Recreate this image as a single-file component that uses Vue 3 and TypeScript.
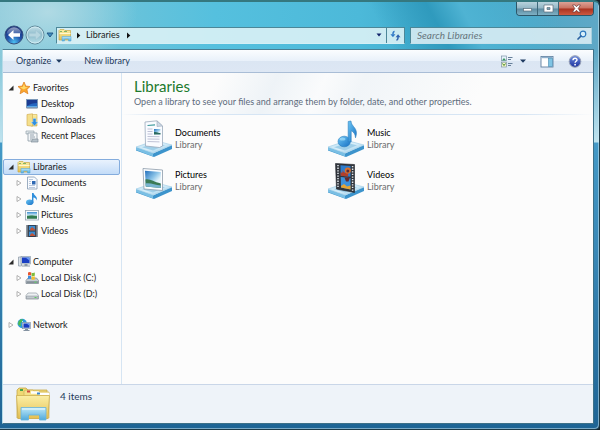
<script setup lang="ts">
import { reactive, ref } from 'vue'

interface NavChild {
  label: string
  icon: string
  expandable: boolean
}

interface NavGroup {
  label: string
  icon: string
  open: boolean
  children: NavChild[]
}

interface LibraryItem {
  name: string
  kind: string
  icon: string
}

const groups = reactive<NavGroup[]>([
  {
    label: 'Favorites',
    icon: 'star',
    open: true,
    children: [
      { label: 'Desktop', icon: 'desktop', expandable: false },
      { label: 'Downloads', icon: 'downloads', expandable: false },
      { label: 'Recent Places', icon: 'recent', expandable: false },
    ],
  },
  {
    label: 'Libraries',
    icon: 'folder',
    open: true,
    children: [
      { label: 'Documents', icon: 'document', expandable: true },
      { label: 'Music', icon: 'note', expandable: true },
      { label: 'Pictures', icon: 'picture', expandable: true },
      { label: 'Videos', icon: 'film', expandable: true },
    ],
  },
  {
    label: 'Computer',
    icon: 'computer',
    open: true,
    children: [
      { label: 'Local Disk (C:)', icon: 'diskc', expandable: true },
      { label: 'Local Disk (D:)', icon: 'diskd', expandable: true },
    ],
  },
  { label: 'Network', icon: 'network', open: false, children: [] },
])

const libraries: LibraryItem[] = [
  { name: 'Documents', kind: 'Library', icon: 'lib-documents' },
  { name: 'Music', kind: 'Library', icon: 'lib-music' },
  { name: 'Pictures', kind: 'Library', icon: 'lib-pictures' },
  { name: 'Videos', kind: 'Library', icon: 'lib-videos' },
]

const selected = ref('Libraries')
const query = ref('')
</script>

<template>
  <div class="window">
    <svg class="sprites" aria-hidden="true">
      <defs>
        <linearGradient id="g-base" x1="0" y1="0" x2="1" y2="1">
          <stop offset="0" stop-color="#b9def0" />
          <stop offset="0.5" stop-color="#d9effa" />
          <stop offset="1" stop-color="#8cc6e6" />
        </linearGradient>
        <linearGradient id="g-note" x1="0" y1="0" x2="1" y2="1">
          <stop offset="0" stop-color="#6cc6f4" />
          <stop offset="1" stop-color="#1670c4" />
        </linearGradient>
        <linearGradient id="g-folder" x1="0" y1="0" x2="0" y2="1">
          <stop offset="0" stop-color="#fbefa6" />
          <stop offset="1" stop-color="#e5c052" />
        </linearGradient>
        <linearGradient id="g-stand" x1="0" y1="0" x2="0" y2="1">
          <stop offset="0" stop-color="#bfe9f8" />
          <stop offset="1" stop-color="#4fa9dc" />
        </linearGradient>
        <linearGradient id="g-scene" x1="0" y1="0" x2="0" y2="1">
          <stop offset="0" stop-color="#3d8fd0" />
          <stop offset="0.5" stop-color="#cfeaf6" />
          <stop offset="0.62" stop-color="#4b9268" />
          <stop offset="1" stop-color="#2b6a50" />
        </linearGradient>
        <linearGradient id="g-sky" x1="0" y1="0" x2="1" y2="1">
          <stop offset="0" stop-color="#2470bc" />
          <stop offset="0.45" stop-color="#8cc4e8" />
          <stop offset="0.7" stop-color="#e4f4fa" />
        </linearGradient>
        <radialGradient id="g-back" cx="0.5" cy="0.9" r="0.8">
          <stop offset="0" stop-color="#4cc0f2" />
          <stop offset="0.5" stop-color="#2254ac" />
          <stop offset="1" stop-color="#16307c" />
        </radialGradient>
        <linearGradient id="g-gloss" x1="0" y1="0" x2="0" y2="1">
          <stop offset="0" stop-color="#ffffff" stop-opacity="0.8" />
          <stop offset="1" stop-color="#ffffff" stop-opacity="0.15" />
        </linearGradient>
        <linearGradient id="g-forward" x1="0" y1="0" x2="0" y2="1">
          <stop offset="0" stop-color="#c3dfe8" />
          <stop offset="0.5" stop-color="#8fbccb" />
          <stop offset="1" stop-color="#b9e2ec" />
        </linearGradient>
        <linearGradient id="g-help" x1="0" y1="0" x2="0" y2="1">
          <stop offset="0" stop-color="#6f8fe0" />
          <stop offset="1" stop-color="#1a2f9c" />
        </linearGradient>
      </defs>

      <symbol id="star" viewBox="0 0 14 14">
        <path d="M7 1 8.8 5.1 13 5.5 9.9 8.4 10.9 12.8 7 10.4 3.1 12.8 4.1 8.4 1 5.5 5.2 5.1Z" fill="#fba72c" stroke="#e08428" stroke-width="0.8" />
        <path d="M7 2.8 8.1 6 11 6.2 8 7.8 7 8.6 4.9 7.5 3 6.1 5.8 5.9Z" fill="#ffd869" />
      </symbol>
      <symbol id="desktop" viewBox="0 0 14 14">
        <rect x="1.5" y="2.5" width="11" height="8" fill="#2466c0" stroke="#7b97b8" />
        <path d="M2 3h10v3C8 6 5 7 2 9Z" fill="#1b3c92" />
        <path d="M2 9.5h10" stroke="#59a9e8" />
        <path d="M1.5 11.5h11" stroke="#aebcca" />
      </symbol>
      <symbol id="downloads" viewBox="0 0 14 14">
        <path d="M6 1.500h6V13H6Z" fill="url(#g-folder)" stroke="#d9b95f" stroke-width="0.7" />
        <path d="M2 1.500 7.500 .8v12.400L2 12.500Z" fill="#f4df8c" stroke="#d4b058" stroke-width="0.7" />
        <path d="M8 5.500h3v3.500h2l-3.500 4L6 9h2Z" fill="#2f8fe0" stroke="#bfe1f8" stroke-width="0.5" />
      </symbol>
      <symbol id="recent" viewBox="0 0 14 14">
        <path d="M1 2h8v3H1Z" fill="#e2e8ec" stroke="#95a3ad" stroke-width="0.7" />
        <path d="M3 4h9v8H3Z" fill="#f3f6f8" stroke="#8e9ca6" stroke-width="0.8" />
        <path d="M5 6h4M5 8h5M5 10h3" stroke="#7d8f9c" stroke-width="0.8" />
        <path d="M8 10h5v3H6Z" fill="#b5c1c9" stroke="#81909b" stroke-width="0.7" />
      </symbol>
      <symbol id="folder" viewBox="0 0 14 14">
        <path d="M1 2.5 2 1.5h4l1 1h5.5V12H1Z" fill="url(#g-folder)" stroke="#c9a846" stroke-width="0.7" />
        <path d="M2 3.5h2M6 3.5h3" stroke="#63a85a" stroke-width="0.8" />
        <path d="M1.5 5.5h11" stroke="#fff8cf" />
        <path d="M4 8.5h9V13h-2.5v-2h-4v2H4Z" fill="url(#g-stand)" stroke="#5aabda" stroke-width="0.6" />
      </symbol>
      <symbol id="document" viewBox="0 0 14 14">
        <path d="M2.5 1h7L12 3.5V13H2.5Z" fill="#f8fbff" stroke="#8499b2" stroke-width="0.8" />
        <path d="M4 3.5h4M4 5.5h2M4 7.5h2M4 9.5h6M4 11.5h6" stroke="#9fb3cf" stroke-width="0.7" />
        <rect x="7" y="5" width="3.5" height="3.5" fill="#2d68b4" />
      </symbol>
      <symbol id="note" viewBox="0 0 14 14">
        <ellipse cx="4.7" cy="10.3" rx="3.7" ry="2.8" fill="url(#g-note)" />
        <path d="M7 1h1.6c.3 2.6 4.6 3.3 3 7.6-.3-2-1.4-2.8-3.2-3.1v5.2H7Z" fill="#2f8fdc" />
      </symbol>
      <symbol id="picture" viewBox="0 0 14 14">
        <rect x="0.5" y="2.5" width="13" height="9.5" fill="#f7fafc" stroke="#93a2b0" stroke-width="0.8" />
        <rect x="2" y="4" width="10" height="6.5" fill="url(#g-scene)" />
        <path d="M2 10.5V8.2c3-1 5-1.2 10 .2v2.1Z" fill="#317c50" />
      </symbol>
      <symbol id="film" viewBox="0 0 14 14">
        <path d="M1.5 1h11v12h-11Z" fill="#2d3440" />
        <rect x="4" y="1.8" width="6" height="4.6" fill="#3b8cd0" />
        <rect x="4" y="7.5" width="6" height="4.6" fill="#3b8cd0" />
        <path d="M5 5.2 7 3l3 2.5v.9H5ZM5 11l2-2 3 2.2v.9H5Z" fill="#c25336" />
        <path d="M2.7 1.5v11.4M11.3 1.5v11.4" stroke="#dce5ee" stroke-width="1" stroke-dasharray="1 1" />
      </symbol>
      <symbol id="computer" viewBox="0 0 14 14">
        <path d="M1.5 2h3v9h-3Z" fill="#dce3ea" stroke="#8a97a4" stroke-width="0.7" />
        <rect x="4" y="1.5" width="9.5" height="7.5" fill="#c8d3de" stroke="#8495a6" stroke-width="0.6" />
        <rect x="5" y="2.5" width="7.5" height="5.5" fill="#1b3fc4" />
        <path d="M8.5 2.5h4v3Z" fill="#6a9df2" />
        <path d="M7.5 9h3v1.5H13v1H5v-1h2.5Z" fill="#8c99a7" />
      </symbol>
      <symbol id="diskc" viewBox="0 0 14 14">
        <path d="M1 9.5 3 7h8.5L13.500 9.500V12.500H1Z" fill="#c4cbd2" stroke="#77828c" stroke-width="0.7" />
        <path d="M1.500 10.200h11.500v1.800H1.500Z" fill="#858f98" />
        <path d="M9.500 11.200h2" stroke="#5fdb62" />
        <path d="M3 1.500c1.300-.8 2.300-.6 3.200 0v3.200c-1-.6-2-.6-3.200 0Z" fill="#e8552d" />
        <path d="M6.600 1.700c1 .5 2 .5 3.200-.1v3.200c-1.200.6-2.200.6-3.200.1Z" fill="#7ebd3b" />
        <path d="M3 5.100c1.200-.6 2.200-.6 3.200 0v3.200c-1-.6-2-.6-3.200 0Z" fill="#3c8ee0" />
        <path d="M6.600 5.300c1 .5 2 .5 3.200-.1v3.200c-1.200.6-2.200.6-3.200.1Z" fill="#f7c02f" />
      </symbol>
      <symbol id="diskd" viewBox="0 0 14 14">
        <path d="M1 8.500 3 6h8.500L13.500 8.500v3.500H1Z" fill="#eef1f3" stroke="#929ba3" stroke-width="0.7" />
        <path d="M1.500 9h11.500v2.700H1.500Z" fill="#c3c9cf" stroke="#7f8890" stroke-width="0.5" />
        <path d="M9.500 10.500h2" stroke="#58cf5c" />
      </symbol>
      <symbol id="network" viewBox="0 0 14 14">
        <circle cx="5.200" cy="5.500" r="4.700" fill="#2d9be0" />
        <path d="M1.500 3.500c2-2.500 3-2.500 4.500-2L5 4 3.500 5 4 8.500 1 6.500Z" fill="#4dbb52" />
        <path d="M5 3h1v5H5Z" fill="#bfe8f8" />
        <rect x="5.500" y="4.500" width="8" height="6.200" fill="#d3dce6" stroke="#7a8ca0" stroke-width="0.600" />
        <rect x="6.500" y="5.500" width="6" height="4.200" fill="#1a3cc0" />
        <path d="M9.500 5.500h3v2.200Z" fill="#6a9df2" />
        <path d="M8 11h3v1h1.500v1h-6v-1H8Z" fill="#8593a2" />
      </symbol>

      <symbol id="base" viewBox="0 0 38 38">
        <path d="M1 27.500 18 33.500 37 25v4L19 37 1 30.500Z" fill="#3d94cc" />
        <path d="M1 27 18 33v3.500L1 30Z" fill="#7abfe4" />
        <path d="M1 27 20 20.500 37 25 18 33Z" fill="url(#g-base)" stroke="#9ccbe6" stroke-width="0.600" />
        <path d="M7 27.200 20 23l10 2.300-12 5.200Z" fill="#9fcfe9" />
      </symbol>
      <symbol id="lib-documents" viewBox="0 0 38 38">
        <use href="#base" />
        <path d="M10 2 22 .8l5.500 5.200V26l-3 1.500L10.500 26Z" fill="#f9fbff" stroke="#9aa9bb" stroke-width="0.800" />
        <path d="M22 1v5.500l5.500-.5Z" fill="#cdd9e6" stroke="#9aa9bb" stroke-width="0.600" />
        <path d="M12.500 5.500 20 4.800" stroke="#3f9a9c" stroke-width="1.200" />
        <path d="M12.500 9h5M12.500 11.500h5M12.500 14h5M12.500 16.500l12 .2M12.500 19l12 .2M12.500 21.500l12 .4" stroke="#b0b4cc" stroke-width="0.800" />
        <rect x="19" y="9" width="6.500" height="5.500" fill="url(#g-sky)" />
        <path d="M19 14.500v-2.500c3-.5 4 1 6.500 1v1.500Z" fill="#2b6a60" />
      </symbol>
      <symbol id="lib-music" viewBox="0 0 38 38">
        <use href="#base" />
        <ellipse cx="17.200" cy="21.500" rx="6.200" ry="5.300" fill="url(#g-note)" stroke="#2a7dbe" stroke-width="0.600" />
        <path d="M21.200 1.500 24 1c0 6 8.300 7 4.500 16.800-.2-4-2-6-4.300-7v11h-3Z" fill="url(#g-note)" stroke="#2a7dbe" stroke-width="0.600" />
        <ellipse cx="15.500" cy="19" rx="3" ry="1.600" fill="#a5def9" opacity="0.700" />
      </symbol>
      <symbol id="lib-pictures" viewBox="0 0 38 38">
        <use href="#base" />
        <path d="M8 6.500 27.500 8V28.500L9 27Z" fill="#fbfdff" stroke="#8b9aaa" stroke-width="0.800" />
        <path d="M10 8.800 25.800 10V26L10.800 24.600Z" fill="url(#g-sky)" />
        <path d="M10.400 17.500c5-1 8 2.500 15.400 4V26L10.800 24.600Z" fill="#3b7a55" />
        <path d="M10.600 21.500c5-1 9 1.500 15.200 2V26L10.800 24.600Z" fill="#78b4d0" />
      </symbol>
      <symbol id="lib-videos" viewBox="0 0 38 38">
        <use href="#base" />
        <path d="M8.500 1.500 27.500 2.500v28L9.500 27Z" fill="#32363d" stroke="#1c2026" stroke-width="0.600" />
        <path d="M13.500 3.200 23.500 4v10.800l-9.800-1Z" fill="#2f7ccc" />
        <path d="M13.700 15 23.500 16v11.500l-9.500-2Z" fill="#3d92dc" />
        <path d="M13.600 10.500h2V8l1.500 2.500h4v4l-7.500-.7Z" fill="#b03f2c" />
        <circle cx="20.800" cy="8.500" r="3.100" fill="#d9702c" />
        <circle cx="20.800" cy="9" r="1.500" fill="#5b2a3a" />
        <path d="M17.500 15.500h5.500l-1.500 4h-2.500Z" fill="#632a2c" />
        <path d="m14 24 3-2 3 2.500 3.500-1v4l-9.500-2Z" fill="#e5a534" />
        <path d="M11 3v23.500" stroke="#e6ecf0" stroke-width="1.500" stroke-dasharray="1.300 1.300" />
        <path d="M25.600 4v25.500" stroke="#e6ecf0" stroke-width="1.500" stroke-dasharray="1.300 1.300" />
      </symbol>
    </svg>

    <header class="chrome">
      <div class="caption">
        <button class="cap min" type="button" aria-label="Minimize">
          <svg viewBox="0 0 11 9"><rect x="1.500" y="4.500" width="8" height="2.500" fill="#fff" stroke="#5c6f7c" stroke-width="0.700" /></svg>
        </button>
        <button class="cap max" type="button" aria-label="Maximize">
          <svg viewBox="0 0 11 9">
            <path d="M1 1h9v7h-9ZM4 3.500v2h3v-2Z" fill="#fff" fill-rule="evenodd" stroke="#5c6f7c" stroke-width="0.700" />
          </svg>
        </button>
        <button class="cap close" type="button" aria-label="Close">
          <svg viewBox="0 0 11 9"><path d="M1.500 1h2.600l1.400 1.800L6.900 1h2.600L7.200 4.500 9.500 8H6.900L5.500 6.200 4.100 8H1.500l2.300-3.500Z" fill="#fff" stroke="#6d3a3a" stroke-width="0.700" /></svg>
        </button>
      </div>

      <div class="navbar">
        <div class="travel">
          <button class="round" type="button" aria-label="Back">
            <svg viewBox="0 0 20 20">
              <circle cx="10" cy="10" r="9" fill="url(#g-back)" stroke="#35507e" />
              <path d="M2.500 8.500a7.600 7.600 0 0 1 15 0C13 10 7 10 2.500 8.500Z" fill="url(#g-gloss)" opacity="0.700" />
              <path d="M4 10 9.500 5v3.300H16v3.400H9.500V15Z" fill="#fff" />
            </svg>
          </button>
          <button class="round" type="button" aria-label="Forward">
            <svg viewBox="0 0 20 20">
              <circle cx="10" cy="10" r="9" fill="url(#g-forward)" stroke="#5f8899" />
              <circle cx="10" cy="10" r="8" fill="none" stroke="#d6eef4" stroke-width="0.800" />
              <path d="M16 10 10.500 5v3.300H4v3.400h6.500V15Z" fill="#b7d6e0" stroke="#9cc3d0" stroke-width="0.500" />
            </svg>
          </button>
          <button class="recent" type="button" aria-label="Recent pages">
            <svg viewBox="0 0 8 6"><path d="M1 1h6L4 5Z" fill="#3f8fc0" stroke="#1d4f80" stroke-width="0.900" /></svg>
          </button>
        </div>

        <div class="address">
          <svg class="icon" aria-hidden="true"><use href="#folder" /></svg>
          <svg class="crumb-arrow" viewBox="0 0 5 7" aria-hidden="true"><path d="M1 .5 4.300 3.500 1 6.500Z" fill="#111" /></svg>
          <a class="crumb" href="#libraries">Libraries</a>
          <svg class="crumb-arrow" viewBox="0 0 5 7" aria-hidden="true"><path d="M1 .5 4.300 3.500 1 6.500Z" fill="#111" /></svg>
          <button class="drop" type="button" aria-label="Previous locations">
            <svg viewBox="0 0 6 4"><path d="M.5.5h5L3 3.500Z" fill="#10226a" /></svg>
          </button>
          <button class="refresh" type="button" aria-label="Refresh">
            <svg viewBox="0 0 12 12">
              <path d="M5 1.700C3.600 1.700 3.200 2.600 3.200 5" fill="none" stroke="#2f78c6" stroke-width="1.600" />
              <path d="M.5 4.500h5.400L3.200 8Z" fill="#2f78c6" />
              <path d="M7 10.800c1.400 0 1.800-.9 1.800-3.300" fill="none" stroke="#2f62ae" stroke-width="1.600" />
              <path d="M6.100 8h5.400L8.800 4.500Z" fill="#2f62ae" />
            </svg>
          </button>
        </div>

        <label class="search">
          <input v-model="query" type="search" placeholder="Search Libraries" aria-label="Search Libraries" />
          <svg viewBox="0 0 10 10" aria-hidden="true">
            <circle cx="6" cy="4" r="2.800" fill="#d8f0fa" stroke="#2d78bd" stroke-width="1.200" />
            <path d="M4 6 1 9" stroke="#2d62a0" stroke-width="1.700" stroke-linecap="round" />
          </svg>
        </label>
      </div>
    </header>

    <div class="client">
      <div class="toolbar" role="toolbar" aria-label="Commands">
        <button class="command" type="button">
          Organize
          <svg class="caret" viewBox="0 0 6 4" aria-hidden="true"><path d="M0 .5h6L3 3.800Z" fill="#1e3a60" /></svg>
        </button>
        <button class="command" type="button">New library</button>
        <div class="tools">
          <button class="tool" type="button" aria-label="Change your view">
            <svg class="glyph" viewBox="0 0 14 13">
              <rect x="1.500" y="1" width="5" height="4.800" fill="#e5f2fa" stroke="#8094a8" stroke-width="0.700" />
              <rect x="1.500" y="7.200" width="5" height="4.800" fill="#f2f6c8" stroke="#8094a8" stroke-width="0.700" />
              <path d="M2 5.500 4 3l2 2.500Z" fill="#369560" />
              <path d="M2.500 8.500 4 10.500l1.500-2" fill="none" stroke="#478726" />
              <path d="M8 2.500h4.500M8 4.500h3M8 8.500h4.500M8 10.500h3" stroke="#67809a" stroke-width="1" />
            </svg>
            <svg class="caret" viewBox="0 0 6 4" aria-hidden="true"><path d="M0 .5h6L3 3.800Z" fill="#1e3a60" /></svg>
          </button>
          <button class="tool" type="button" aria-label="Show the preview pane">
            <svg class="glyph" viewBox="0 0 14 13">
              <rect x="1" y="1.500" width="12" height="10.500" fill="#fff" stroke="#5f7f9f" stroke-width="0.900" />
              <path d="M1.500 2.500h11" stroke="#8fb0cc" stroke-width="1.400" />
              <rect x="8.500" y="3.200" width="4" height="8.300" fill="#7fc4e4" stroke="#4889b0" stroke-width="0.600" />
            </svg>
          </button>
          <button class="tool" type="button" aria-label="Get help">
            <svg class="glyph" viewBox="0 0 14 13">
              <circle cx="7" cy="6.500" r="5.800" fill="url(#g-help)" stroke="#97a0b4" stroke-width="1" />
              <path d="M5 5.200C5 2.500 9.200 2.700 9 5c-.1 1.300-1.900 1.300-1.900 2.700" fill="none" stroke="#fff" stroke-width="1.400" />
              <circle cx="7.100" cy="9.700" r="0.900" fill="#fff" />
            </svg>
          </button>
        </div>
      </div>

      <div class="body">
        <nav class="tree" aria-label="Navigation pane">
          <section v-for="group in groups" :key="group.label" class="group">
            <div class="row" :class="{ selected: selected === group.label }">
              <button
                class="toggle"
                type="button"
                :aria-label="`Toggle ${group.label}`"
                :aria-expanded="group.open"
                @click="group.open = !group.open"
              >
                <svg viewBox="0 0 6 6">
                  <path v-if="group.open" d="M5.500.5v5H.5Z" fill="#2b2b2b" />
                  <path v-else d="M1 .5 5 3 1 5.500Z" fill="#fff" stroke="#a0a0a0" stroke-width="0.800" />
                </svg>
              </button>
              <svg class="icon" aria-hidden="true"><use :href="`#${group.icon}`" /></svg>
              <a :href="`#${group.label}`" @click.prevent="selected = group.label">{{ group.label }}</a>
            </div>
            <template v-if="group.open">
              <div
                v-for="child in group.children"
                :key="child.label"
                class="row child"
                :class="{ selected: selected === child.label }"
              >
                <button v-if="child.expandable" class="toggle" type="button" :aria-label="`Expand ${child.label}`">
                  <svg viewBox="0 0 6 6"><path d="M1 .5 5 3 1 5.500Z" fill="#fff" stroke="#a0a0a0" stroke-width="0.800" /></svg>
                </button>
                <span v-else class="toggle"></span>
                <svg class="icon" aria-hidden="true"><use :href="`#${child.icon}`" /></svg>
                <a :href="`#${child.label}`" @click.prevent="selected = child.label">{{ child.label }}</a>
              </div>
            </template>
          </section>
        </nav>

        <main class="content">
          <div class="intro">
            <h1>Libraries</h1>
            <p>Open a library to see your files and arrange them by folder, date, and other properties.</p>
          </div>
          <ul class="tiles">
            <li v-for="item in libraries" :key="item.name">
              <a class="tile" :href="`#${item.name}`">
                <svg class="tile-icon" aria-hidden="true"><use :href="`#${item.icon}`" /></svg>
                <span class="tile-text">
                  <span class="tile-name">{{ item.name }}</span>
                  <span class="tile-kind">{{ item.kind }}</span>
                </span>
              </a>
            </li>
          </ul>
        </main>
      </div>

      <footer class="details">
        <svg class="stack" viewBox="0 0 36 36" aria-hidden="true">
          <path d="M2 4 4 2h7l2 2h19v28H2Z" fill="#efd873" stroke="#c7a84c" stroke-width="0.800" />
          <path d="M9 5 11 4h7l2 2h14v26H9Z" fill="#f4e08a" stroke="#cfb158" stroke-width="0.700" />
          <path d="M16 6.500h7l2 1.500h9" fill="none" stroke="#fff" stroke-width="2.500" />
          <rect x="5" y="3" width="3" height="2" fill="#45a34b" />
          <rect x="12" y="4.500" width="3" height="2" fill="#d24b40" />
          <rect x="22" y="6.500" width="3" height="2" fill="#3d86c8" />
          <path d="M1.500 9.500h33L33 32.500H3Z" fill="url(#g-folder)" stroke="#cdae50" stroke-width="0.800" />
          <path d="M6 21.500h25V34h-6.500v-5h-11v5H6Z" fill="url(#g-stand)" stroke="#67b2dc" stroke-width="0.800" />
          <path d="M7 23h23" stroke="#e0f6fd" stroke-width="1.300" />
        </svg>
        <span>4 items</span>
      </footer>
    </div>
  </div>
</template>

<style>
html,
body {
  margin: 0;
  background: #16242c;
}
</style>

<style scoped>
.window {
  box-sizing: border-box;
  display: flex;
  flex-direction: column;
  min-height: 100vh;
  padding: 0 5px 5px 2px;
  border: 0 solid #1d3a48;
  border-width: 2px 1px 1px 0;
  border-top-color: #35787f;
  border-radius: 0 6px 5px 0;
  box-shadow: inset -1px -1px 0 rgba(210, 235, 245, 0.5);
  background:
    linear-gradient(180deg, transparent 50px, rgba(190, 226, 238, 0.9) 130px, #bfe3ee 140px, #4499c6 141px, #3a88b6 250px, #1d6394 430px),
    radial-gradient(ellipse 90px 60px at 8% 10px, #b0dae4 0%, transparent 100%),
    linear-gradient(62deg, transparent 72%, #2f9abd 79%, #4fb3d3 83%, transparent 94%),
    linear-gradient(90deg, #83c6d8 0%, #6ac3da 20%, #55c0de 36%, #4cb9d9 60%, #3da6c8 78%, #5fa8c6 100%);
  color: #1a1a1a;
  font-family: Lato, "Open Sans", sans-serif;
  font-size: 9px;
  line-height: 12px;
}

.sprites {
  position: absolute;
  width: 0;
  height: 0;
}

button,
input {
  margin: 0;
  padding: 0;
  border: 0;
  background: none;
  color: inherit;
  font: inherit;
}

a {
  color: inherit;
  text-decoration: none;
}

svg {
  display: block;
  flex: none;
}

.icon {
  width: 14px;
  height: 14px;
}

/* Title area */
.chrome {
  display: flex;
  flex-direction: column;
  height: 47px;
}

.caption {
  display: flex;
  align-self: flex-end;
  height: 14px;
  box-sizing: border-box;
  border: 1px solid #2d5668;
  border-top: 0;
  border-radius: 0 0 4px 4px;
  overflow: hidden;
}

.cap {
  display: flex;
  align-items: center;
  justify-content: center;
  width: 21px;
  border-right: 1px solid #3c687a;
  background: linear-gradient(#b8d3dd 0%, #93b6c5 48%, #5d8ca2 52%, #7eb0c4 100%);
}

.cap svg {
  width: 11px;
  height: 9px;
}

.cap.close {
  width: 34px;
  border-right: 0;
  background: linear-gradient(#dba297 0%, #c9705f 48%, #a93220 52%, #cc5940 100%);
}

.navbar {
  display: flex;
  align-items: center;
  gap: 5px;
  padding: 9px 2px 0 2px;
}

.travel {
  display: flex;
  align-items: center;
  gap: 1px;
}

.round {
  display: block;
  width: 20px;
  height: 20px;
}

.round svg {
  width: 20px;
  height: 20px;
}

.recent {
  display: flex;
  margin-right: -3px;
}

.recent svg {
  width: 8px;
  height: 6px;
}

.address {
  display: flex;
  flex: 347 1 0;
  align-items: center;
  box-sizing: border-box;
  height: 17px;
  min-width: 0;
  border: 1px solid #4c8798;
  border-bottom-color: #d4eff5;
  background: rgba(222, 243, 246, 0.88);
}

.address .icon {
  margin: 0 4px 0 1px;
}

.crumb-arrow {
  width: 5px;
  height: 7px;
}

.crumb {
  padding: 0 6px 0 5px;
}

.drop {
  display: flex;
  align-items: center;
  justify-content: center;
  width: 14px;
  height: 15px;
  margin-left: auto;
}

.drop svg {
  width: 6px;
  height: 4px;
}

.refresh {
  display: flex;
  align-items: center;
  justify-content: center;
  width: 18px;
  height: 15px;
  border-left: 1px solid #4c8798;
}

.refresh svg {
  width: 11px;
  height: 11px;
}

.search {
  display: flex;
  flex: 170 1 0;
  align-items: center;
  box-sizing: border-box;
  height: 17px;
  min-width: 0;
  padding: 0 4px 0 6px;
  border: 1px solid #4c8798;
  border-color: #4c8798 #a9d0de #c5e2ec #4c8798;
  background: rgba(224, 240, 246, 0.85);
}

.search input {
  flex: 1;
  min-width: 0;
  outline: none;
  font-size: 10px;
}

.search input::placeholder {
  color: #66757c;
  font-style: italic;
  opacity: 1;
}

.search svg {
  width: 10px;
  height: 10px;
}

/* Client area */
.client {
  display: flex;
  flex: 1;
  flex-direction: column;
  border: 1px solid #3d7088;
  border-left-color: #b5dbe8;
  border-top-color: #4a7d92;
  background: #fcfcfc;
}

.toolbar {
  display: flex;
  align-items: center;
  gap: 22px;
  height: 22px;
  padding: 0 11px 0 13px;
  border-bottom: 1px solid #a9bdd6;
  background: linear-gradient(#fbfdff 0%, #e9f1fa 48%, #dbe6f3 52%, #dde7f4 100%);
  color: #1e395b;
}

.command {
  display: flex;
  align-items: center;
  gap: 5px;
}

.caret {
  width: 6px;
  height: 4px;
}

.tools {
  display: flex;
  align-items: center;
  gap: 14px;
  margin-left: auto;
}

.tool {
  display: flex;
  align-items: center;
  gap: 6px;
}

.glyph {
  width: 14px;
  height: 13px;
}

.body {
  display: flex;
  flex: 1;
}

.tree {
  display: flex;
  flex: none;
  flex-direction: column;
  gap: 15px;
  box-sizing: border-box;
  width: 119px;
  padding: 7px 1px 7px 0;
  border-right: 1px solid #d6e5f3;
}

.row {
  display: flex;
  align-items: center;
  gap: 3px;
  box-sizing: border-box;
  height: 16px;
  padding: 0 4px;
  border: 1px solid transparent;
  border-radius: 2px;
}

.row .icon {
  margin-right: -1px;
}

.row.child {
  padding-left: 12px;
}

.row.selected {
  border-color: #84acdd;
  background: linear-gradient(#e9f2fd, #c3dcf8);
}

.toggle {
  width: 6px;
  height: 6px;
}

.toggle svg {
  width: 6px;
  height: 6px;
}

.content {
  flex: 1;
  min-width: 0;
}

.intro {
  padding: 3px 0 6px 12px;
  border-bottom: 1px solid;
  border-image: linear-gradient(90deg, #fcfcfc, #d6e5f4 8%, #d6e5f4 85%, #fcfcfc) 1;
  background: linear-gradient(115deg, #fcfcfc 20%, #eef3f7 32%, #fafbfc 42%, #f1f5f8 50%, #fcfcfc 75%);
}

h1 {
  margin: 0;
  color: #1c7a2c;
  font-size: 15px;
  font-weight: 400;
  line-height: 20px;
}

p {
  margin: 0;
  color: #5d6b7c;
}

.tiles {
  display: grid;
  grid-template-columns: 192px 192px;
  grid-auto-rows: 42px;
  margin: 0;
  padding: 5px 0 0 13px;
  list-style: none;
}

.tile {
  display: flex;
  align-items: center;
  gap: 2px;
}

.tile-icon {
  width: 38px;
  height: 38px;
}

.tile-text {
  display: flex;
  flex-direction: column;
}

.tile-name {
  color: #000;
}

.tile-kind {
  color: #6d6d6d;
}

/* Details pane */
.details {
  display: flex;
  gap: 9px;
  box-sizing: border-box;
  height: 39px;
  padding: 1px 12px;
  border-top: 1px solid #c9d6e8;
  background: #eef3f9;
  color: #1e395b;
  font-size: 10px;
}

.details span {
  padding-top: 4px;
}

.stack {
  width: 36px;
  height: 36px;
}
</style>
